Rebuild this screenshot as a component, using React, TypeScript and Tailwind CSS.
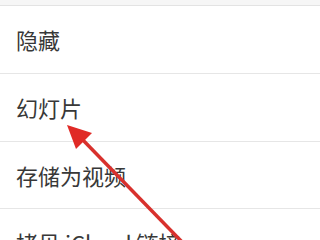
const items = ["隐藏", "幻灯片", "存储为视频", "拷贝 iCloud 链接"];

function Arrow() {
  return (
    <svg
      className="pointer-events-none absolute left-0 top-0"
      width="320"
      height="240"
      viewBox="0 0 320 240"
    >
      <line x1="80" y1="137" x2="185" y2="245" stroke="#d8312d" strokeWidth="3.5" />
      <polygon points="67,125 92,133 76,149" fill="#e02a26" />
    </svg>
  );
}

export default function App() {
  return (
    <div
      className="relative h-[240px] w-[320px] overflow-hidden bg-white"
      style={{ fontFamily: '"Noto Sans CJK SC", "Noto Sans", sans-serif' }}
    >
      <div className="h-[6px] border-b border-[#e3e3e3] bg-[#f6f6f6]" />
      {items.map((label, i) => (
        <div
          key={label}
          className={`flex items-center border-b border-[#e6e6e6] pl-[16px] text-[22px] text-[#383838] ${
            i === 2 ? "h-[67px]" : "h-[68px]"
          }`}
        >
          {label}
        </div>
      ))}
      <Arrow />
    </div>
  );
}
